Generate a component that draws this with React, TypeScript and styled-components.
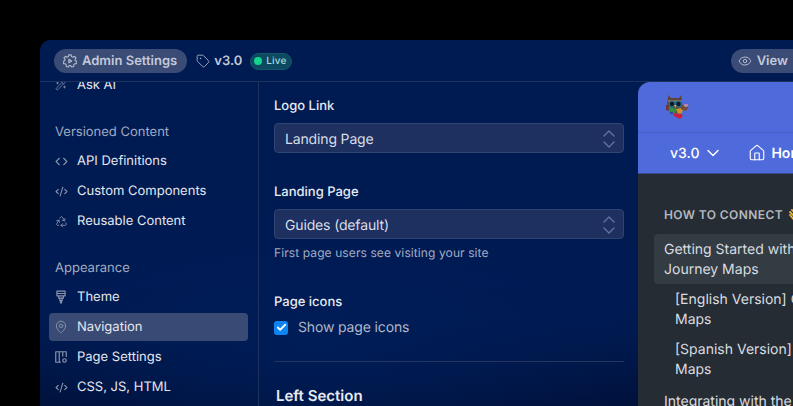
import React from 'react';
import styled, { createGlobalStyle } from 'styled-components';
import { Tag, Eye, ChevronDown, House, Code, CodeXml, Recycle, MapPin, WandSparkles, ChevronsUpDown, Check } from 'lucide-react';

const Global = createGlobalStyle`
  html, body { margin: 0; padding: 0; background: #000; width: 793px; height: 406px; overflow: hidden; }
  body { font-family: Inter, "Liberation Sans", sans-serif; -webkit-font-smoothing: antialiased; text-rendering: geometricPrecision; }
`;
const Page = styled.div`
  width: 793px; height: 406px; overflow: hidden; padding: 40px 0 0 40px; box-sizing: border-box; background: #000;
`;
const Frame = styled.div`
  width: 900px; height: 520px; border-radius: 10px 0 0 0; overflow: hidden; display: flex; flex-direction: column; color: #fff;
  background: radial-gradient(ellipse 420px 150px at 280px 300px, #001d58 0%, transparent 100%), linear-gradient(180deg, #001a52 0%, #001a52 240px, #001a50 280px, #000f36 366px);
`;
const TopBar = styled.header`
  height: 40px; flex: none; display: flex; align-items: center; padding: 1px 0 0 14px; border-bottom: 1px solid #1e3260; box-sizing: content-box;
`;
const Pill = styled.div`
  height: 24px; display: inline-flex; align-items: center; gap: 5px; padding: 0 10px 0 9px; border-radius: 12px; background: #3a4b75;
  font-size: 13px; font-weight: 600; color: #c2c9d8; svg { color: #b8bfd0; }
`;
const Version = styled.div`
  display: inline-flex; align-items: center; gap: 4px; margin-left: 9px; font-size: 13px; font-weight: 600; color: #c2c9d8;
`;
const LiveBadge = styled.div`
  display: inline-flex; align-items: center; gap: 4px; height: 17px; margin-left: 8px; padding: 0 4px 0 3px; border-radius: 9px;
  background: #0c4a62; border: 1px solid #10586e; box-sizing: border-box; color: #a9d9d9; font-size: 10px; font-weight: 500; letter-spacing: .2px;
`;
const Dot = styled.span`width: 8px; height: 8px; border-radius: 50%; background: #14d58f;`;
const ViewPill = styled(Pill)`margin-left: 439px; padding: 0 30px 0 7px; font-size: 13px;`;
const Body = styled.div`flex: 1; display: flex; min-height: 0;`;
const Sidebar = styled.aside`
  width: 219px; flex: none; box-sizing: border-box; border-right: 1px solid #1e3260; padding: 0 10px 0 9px; overflow: hidden;
`;
const SideInner = styled.div`margin-top: -11px;`;
const Group = styled.div`display: flex; flex-direction: column; gap: 2px; margin-bottom: 23px;`;
const GroupTitle = styled.div`
  height: 20px; margin-bottom: 3px; padding-left: 6px; display: flex; align-items: center; font-size: 13px; color: #a2abc0;
`;
const Item = styled.div<{ $active?: boolean }>`
  height: 28px; display: flex; align-items: center; gap: 10px; padding-left: 6px; border-radius: 4px;
  background: ${p => (p.$active ? '#394b75' : 'transparent')}; font-size: 13px; color: #e4e7ee;
`;
const IconSlot = styled.span`
  width: 12px; height: 14px; display: inline-flex; align-items: center; justify-content: center; flex: none; color: #8a95ad;
  svg { flex: none; }
`;
const Main = styled.main`
  width: 379px; flex: none; box-sizing: border-box; padding: 15px 14px 0 15px; overflow: hidden;
`;
const Field = styled.div`margin-bottom: 30px;`;
const Label = styled.div`font-size: 13px; font-weight: 500; line-height: 18px; color: #e8ebf1; margin-bottom: 8px;`;
const SelectBox = styled.div`
  height: 30px; box-sizing: border-box; border: 1px solid #2f4470; border-radius: 4px; background: #1d3060; display: flex; align-items: center;
  justify-content: space-between; padding: 2px 2px 0 10px; font-size: 14px; letter-spacing: -.15px; color: #d9dde6; svg { color: #66759a; }
`;
const Help = styled.div`font-size: 12px; line-height: 16px; margin-top: 6px; letter-spacing: .1px; color: #a2abc0; margin-bottom: 32px;`;
const CheckRow = styled.div`display: flex; align-items: center; gap: 10px; font-size: 14px; letter-spacing: -.15px; color: #b0b7c8;`;
const CheckBox = styled.span`
  width: 14px; height: 14px; border-radius: 3px; background: #0d84f2; display: inline-flex; align-items: center; justify-content: center; color: #fff;
`;
const Rule = styled.hr`border: 0; height: 1px; background: #22365f; margin: -5px 0 25px; `;
const SectionTitle = styled.div`font-size: 15px; font-weight: 600; line-height: 18px; color: #e8ebf1; padding-left: 2px;`;
const Preview = styled.section`
  flex: 1; border-radius: 12px 0 0 0; overflow: hidden; background: #262c33; display: flex; flex-direction: column; color: #dfe2e6;
`;
const LogoBar = styled.div`
  height: 51px; flex: none; box-sizing: border-box; background: #4f6bdb; border-bottom: 1px solid #4460c6; padding: 12px 0 0 27px;
`;
const NavBar = styled.div`
  height: 41px; flex: none; background: #4f6bdb; box-sizing: border-box; border-bottom: 1px solid #3a4b8a; display: flex; align-items: center;
  padding-left: 32px; color: #fff; font-size: 14px; font-weight: 500;
`;
const VersionSelect = styled.div`display: inline-flex; align-items: center; gap: 4px;`;
const NavLink = styled.div`display: inline-flex; align-items: center; gap: 5px; margin-left: 25px; font-weight: 600;`;
const DocNav = styled.div`padding: 33px 0 0 16px; width: 276px; box-sizing: border-box;`;
const DocHeading = styled.div`
  display: flex; align-items: center; gap: 6px; padding-left: 10px; font-size: 12px; font-weight: 600; letter-spacing: .4px; color: #b4b9c0; line-height: 16px; margin-bottom: 11px; white-space: nowrap;
`;
const DocItem = styled.div<{ $active?: boolean; $sub?: boolean; $gap?: boolean }>`
  font-size: 14px; line-height: 20px; padding: 6px 0 4px ${p => (p.$sub ? '21px' : '10px')}; border-radius: 4px; color: #d9dde1;
  background: ${p => (p.$active ? '#343c43' : 'transparent')}; margin-top: ${p => (p.$gap ? '2px' : '0')}; width: ${p => (p.$active ? '240px' : '260px')};
`;

const GearPlay = () => (
  <svg width="14" height="14" viewBox="0 0 24 24" fill="none" stroke="currentColor" strokeWidth="1.8" strokeLinejoin="round">
    <path d="M10 2h4l.7 3 2.3 1 2.7-1.6 2.6 2.9-1.7 2.4.5 2.5 2.9 1-.9 3.8-3 .1-1.6 2-.1 2.9-3.7.9-1.5-2.6h-2.4l-1.5 2.6-3.7-.9-.1-2.9-1.6-2-3-.1-.9-3.8 2.9-1 .5-2.5L1.7 7.3l2.6-2.9L7 6l2.3-1z" transform="translate(0 -.5)" />
    <path d="M10 9l5 3-5 3z" />
  </svg>
);
const ThemeIcon = () => (
  <svg width="14" height="14" viewBox="0 0 24 24" fill="none" stroke="currentColor" strokeWidth="2" strokeLinejoin="round">
    <path d="M5 2h14v8H5zM5 6h14M8 10v4h8v-4M10 14h4v4h-4zM11 18h2v4h-2z" />
  </svg>
);
const PageIcon = () => (
  <svg width="14" height="14" viewBox="0 0 24 24" fill="none" stroke="currentColor" strokeWidth="2" strokeLinejoin="round">
    <path d="M12 21H3V3h18v9M9 3v18M15 3v8" />
    <circle cx="18" cy="18" r="3" />
  </svg>
);
const Owl = () => (
  <svg width="26" height="26" viewBox="0 0 26 26">
    <path d="M3.5 1l2.5 3h8l2-3 .8 5 .7 8-3 5H5L2 14l.5-8z" fill="#5f4336" />
    <rect x="3" y="6" width="14" height="2" fill="#8a6a58" />
    <circle cx="7" cy="10" r="3.4" fill="#2c6f8f" />
    <circle cx="13.5" cy="10" r="3.4" fill="#2c6f8f" />
    <circle cx="7" cy="10" r="2.2" fill="#0e1a26" />
    <circle cx="13.5" cy="10" r="2.2" fill="#0e1a26" />
    <path d="M9.2 11h2.2l-1.1 3z" fill="#eab021" />
    <path d="M3 13l6 1 3 1-2 5H5z" fill="#2f8f49" />
    <path d="M11 15l5-1 2 1-1 4-4 1z" fill="#c79624" />
    <path d="M1 11l2 0 1 6-3-1z" fill="#7a2f47" />
    <path d="M16 11h4.5c2 0 3 .5 3 2l-2 3.5h-3L16 15z" fill="#6f4d3a" />
    <ellipse cx="21" cy="11.5" rx="2.4" ry="1.4" fill="#b78aa6" />
    <path d="M8 19l8 1 2 2-3 3-6-3z" fill="#c9203a" />
    <path d="M5 18h3v2H5z" fill="#3a4a9a" />
  </svg>
);
const Wave = () => (
  <svg width="15" height="15" viewBox="0 0 15 15" fill="none" stroke="#e6ae3a" strokeWidth="1.8" strokeLinecap="round" style={{ flex: 'none' }}>
    <path d="M1 4l6 6M3 2l7 7M6 1l6 7M1 7l5 6" />
    <path d="M4 10l6 4 3-3-1-5z" fill="#e6ae3a" stroke="none" />
  </svg>
);

export default function App() {
  return (
    <Page>
      <Global />
      <Frame>
        <TopBar>
          <Pill><GearPlay /><span>Admin Settings</span></Pill>
          <Version><Tag size={14} strokeWidth={1.5} color="#aeb6c8" /><span>v3.0</span></Version>
          <LiveBadge><Dot /><span>Live</span></LiveBadge>
          <ViewPill><Eye size={14} strokeWidth={1.6} /><span>View</span></ViewPill>
        </TopBar>
        <Body>
          <Sidebar>
            <SideInner>
              <Group><Item><IconSlot><WandSparkles size={12} strokeWidth={1.5} /></IconSlot>Ask AI</Item></Group>
              <Group>
                <GroupTitle>Versioned Content</GroupTitle>
                <Item><IconSlot><Code size={13} /></IconSlot>API Definitions</Item>
                <Item><IconSlot><CodeXml size={13} /></IconSlot>Custom Components</Item>
                <Item><IconSlot><Recycle size={13} strokeWidth={1.6} /></IconSlot>Reusable Content</Item>
              </Group>
              <Group>
                <GroupTitle>Appearance</GroupTitle>
                <Item><IconSlot><ThemeIcon /></IconSlot>Theme</Item>
                <Item $active><IconSlot><MapPin size={14} strokeWidth={1.6} /></IconSlot>Navigation</Item>
                <Item><IconSlot><PageIcon /></IconSlot>Page Settings</Item>
                <Item><IconSlot><CodeXml size={13} /></IconSlot>CSS, JS, HTML</Item>
              </Group>
            </SideInner>
          </Sidebar>
          <Main>
            <Field>
              <Label>Logo Link</Label>
              <SelectBox>Landing Page<ChevronsUpDown size={24} strokeWidth={1.3} /></SelectBox>
            </Field>
            <Field>
              <Label>Landing Page</Label>
              <SelectBox>Guides (default)<ChevronsUpDown size={24} strokeWidth={1.3} /></SelectBox>
              <Help>First page users see visiting your site</Help>
            </Field>
            <Field>
              <Label>Page icons</Label>
              <CheckRow><CheckBox><Check size={11} strokeWidth={4} /></CheckBox>Show page icons</CheckRow>
            </Field>
            <Rule />
            <SectionTitle>Left Section</SectionTitle>
          </Main>
          <Preview>
            <LogoBar><Owl /></LogoBar>
            <NavBar>
              <VersionSelect>v3.0<ChevronDown size={20} strokeWidth={1.7} /></VersionSelect>
              <NavLink><House size={18} strokeWidth={1.5} />Home</NavLink>
            </NavBar>
            <DocNav>
              <DocHeading>HOW TO CONNECT <Wave /></DocHeading>
              <DocItem $active>Getting Started with Customer Journey Maps</DocItem>
              <DocItem $sub>[English Version] Customer Journey Maps</DocItem>
              <DocItem $sub>[Spanish Version] Customer Journey Maps</DocItem>
              <DocItem $gap>Integrating with the API</DocItem>
            </DocNav>
          </Preview>
        </Body>
      </Frame>
    </Page>
  );
}
